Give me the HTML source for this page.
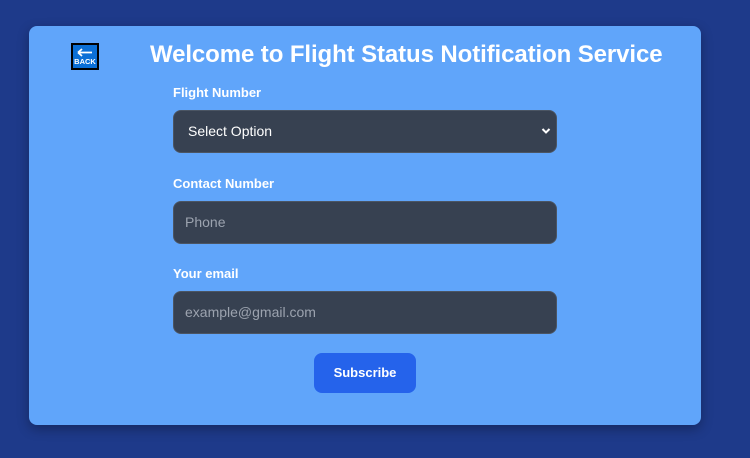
<!DOCTYPE html>
<html><head><style>
*{box-sizing:border-box;margin:0;padding:0}
body{width:750px;height:458px;background:#1e3a8a;font-family:"Liberation Sans",sans-serif;position:relative;overflow:hidden}
.card{position:absolute;left:29px;top:26px;width:672px;height:399px;background:#60a5fa;border-radius:8px;box-shadow:0 4px 12px rgba(0,0,0,.3)}
.back{position:absolute;left:71px;top:43px;width:28px;height:27px;background:#0b6fd6;border:2px solid #000;color:#fff;font-size:7.5px;font-weight:bold;text-align:center;line-height:8px}
h1{position:absolute;left:150px;top:41px;font-size:24px;font-weight:bold;color:#fff;letter-spacing:-0.1px}
.lbl{position:absolute;left:173px;font-size:13px;font-weight:bold;color:#fff}
.fld{position:absolute;left:173px;width:384px;height:43px;background:#374151;border:1px solid #4b5563;border-radius:8px;color:#9ca3af;font-size:14px;padding-left:11px;line-height:41px}
.btn{position:absolute;left:314px;top:353px;width:102px;height:40px;background:#2563eb;border-radius:8px;color:#fff;font-size:13px;font-weight:bold;text-align:center;line-height:40px}
</style></head><body>
<div class="card"></div>
<div class="back"><svg width="18" height="11" viewBox="0 0 18 11" style="display:block;margin:2px auto 0"><path d="M2 5.5H16M2 5.5L6 2M2 5.5L6 9" stroke="#fff" stroke-width="1.8" fill="none"/></svg>BACK</div>
<h1>Welcome to Flight Status Notification Service</h1>
<div class="lbl" style="top:85px">Flight Number</div>
<div class="fld" style="top:110px;color:#fff;padding-left:14px">Select Option<svg style="position:absolute;right:5px;top:16px" width="10" height="8" viewBox="0 0 10 8"><path d="M1.5 2L5 5.5 8.5 2" stroke="#fff" stroke-width="2" fill="none"/></svg></div>
<div class="lbl" style="top:176px">Contact Number</div>
<div class="fld" style="top:201px">Phone</div>
<div class="lbl" style="top:266px">Your email</div>
<div class="fld" style="top:291px">example@gmail.com</div>
<div class="btn">Subscribe</div>
</body></html>
